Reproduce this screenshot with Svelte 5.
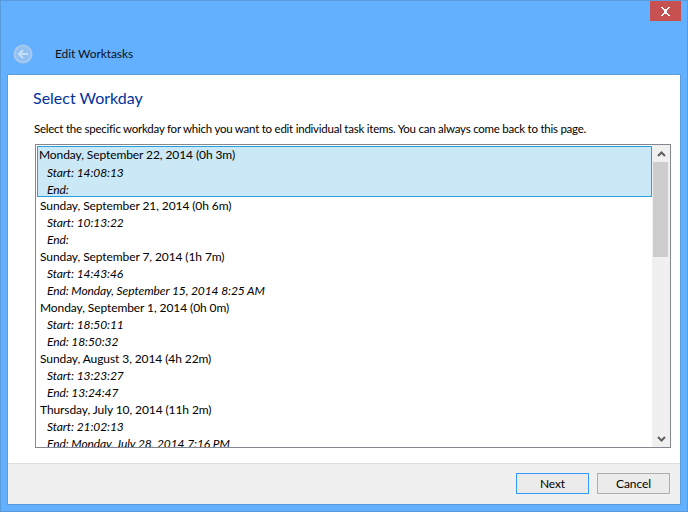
<script>
  const days = [
    { title: 'Monday, September 22, 2014 (0h 3m)', start: '14:08:13', end: '', selected: true },
    { title: 'Sunday, September 21, 2014 (0h 6m)', start: '10:13:22', end: '' },
    { title: 'Sunday, September 7, 2014 (1h 7m)', start: '14:43:46', end: 'Monday, September 15, 2014 8:25 AM' },
    { title: 'Monday, September 1, 2014 (0h 0m)', start: '18:50:11', end: '18:50:32' },
    { title: 'Sunday, August 3, 2014 (4h 22m)', start: '13:23:27', end: '13:24:47' },
    { title: 'Thursday, July 10, 2014 (11h 2m)', start: '21:02:13', end: 'Monday, July 28, 2014 7:16 PM' }
  ];
</script>

<div class="window">
  <div class="titlebar">
    <button class="close" aria-label="Close">
      <svg width="11" height="9" viewBox="0 0 11 9" shape-rendering="crispEdges"><path d="M1 0h2v1h1v1h3V1h1V0h2v1H9v1H8v1H7v3h1v1h1v1h1v1H8V8H7V7H4v1H3v1H1V8h1V7h1V6h1V3H3V2H2V1H1z" fill="#fff"/></svg>
    </button>
  </div>
  <div class="header">
    <svg class="back" width="20" height="20" viewBox="0 0 20 20">
      <circle cx="10" cy="10" r="8.5" fill="#8fc0f2" stroke="#a9c9ec" stroke-width="2"/>
      <path d="M15 10H6.5M10 6l-4 4 4 4" fill="none" stroke="#c4dcf4" stroke-width="2.2"/>
    </svg>
    <span class="wtitle">Edit Worktasks</span>
  </div>
  <div class="panel">
    <div class="content">
      <h1>Select Workday</h1>
      <p>Select the specific workday for which you want to edit individual task items. You can always come back to this page.</p>
      <div class="listbox">
        <div class="items">
          {#each days as d}
            <div class="item" class:selected={d.selected}>
              <div class="line head">{d.title}</div>
              <div class="line sub">Start: {d.start}</div>
              <div class="line sub">End: {d.end}</div>
            </div>
          {/each}
        </div>
        <div class="scrollbar">
          <div class="arrow">
            <svg width="9" height="6" viewBox="0 0 9 6"><path d="M1 5l3.5-3.5L8 5" fill="none" stroke="#606060" stroke-width="2"/></svg>
          </div>
          <div class="track"><div class="thumb"></div></div>
          <div class="arrow">
            <svg width="9" height="6" viewBox="0 0 9 6"><path d="M1 1l3.5 3.5L8 1" fill="none" stroke="#606060" stroke-width="2"/></svg>
          </div>
        </div>
      </div>
    </div>
    <div class="footer">
      <button class="btn default">Next</button>
      <button class="btn">Cancel</button>
    </div>
  </div>
</div>

<style>
  :global(body) { margin: 0; }
  * { box-sizing: border-box; }
  .window {
    width: 688px;
    height: 512px;
    background: #62b0ff;
    border: 1px solid #5a9bdb;
    display: flex;
    flex-direction: column;
    padding: 0 6px 6px 6px;
    font-family: Lato, sans-serif;
    font-size: 12px;
    letter-spacing: -0.09px;
    color: #000;
    overflow: hidden;
  }
  .titlebar {
    height: 20px;
    display: flex;
    justify-content: flex-end;
    flex: none;
  }
  .close {
    width: 31px;
    height: 20px;
    background: #c75050;
    border: 0;
    padding: 0;
    display: flex;
    align-items: center;
    justify-content: center;
  }
  .header {
    height: 53px;
    flex: none;
    display: flex;
    align-items: center;
    padding: 13px 0 0 6px;
  }
  .wtitle { margin: 0 0 2px 22px; color: #111; }
  .panel {
    flex: 1;
    min-height: 0;
    border: 1px solid #5a9bdb;
    background: #fff;
    display: flex;
    flex-direction: column;
  }
  .content { flex: 1; min-height: 0; padding: 0 9px 15px 27px; display: flex; flex-direction: column; }
  h1 {
    margin: 12px 0 0 -2px;
    font-size: 16px;
    font-weight: 400;
    line-height: 22px;
    letter-spacing: 0;
    color: #003399;
  }
  p { margin: 11px 0 0 -1px; line-height: 18px; white-space: nowrap; font-size: 11.5px; letter-spacing: -0.24px; }
  .listbox {
    flex: 1;
    min-height: 0;
    margin-top: 6px;
    border: 1px solid #828790;
    display: flex;
    overflow: hidden;
  }
  .items { flex: 1; min-width: 0; padding: 1px 0 0 1px; overflow: hidden; }
  .item { height: 51px; padding-left: 3px; }
  .item.selected { background: #cbe8f6; border: 1px solid #26a0da; padding-left: 1px; }
  .line { height: 17px; line-height: 17px; white-space: nowrap; }
  .selected .head { margin: -1px 0 1px; }
  .sub { font-style: italic; padding-left: 7px; }
  .selected .sub { padding-left: 8px; }
  .scrollbar { width: 18px; flex: none; background: #f0f0f0; display: flex; flex-direction: column; }
  .arrow { height: 17px; flex: none; display: flex; align-items: center; justify-content: center; }
  .track { flex: 1; }
  .thumb { height: 95px; margin: 0 2px 0 1px; background: #cdcdcd; }
  .footer {
    height: 41px;
    flex: none;
    background: #f0f0f0;
    border-top: 1px solid #dfdfdf;
    display: flex;
    justify-content: flex-end;
    align-items: center;
    gap: 8px;
    padding: 0 10px 1px 0;
  }
  .btn {
    width: 73px;
    height: 21px;
    background: #ebebeb;
    border: 1px solid #adadad;
    font: inherit;
    letter-spacing: inherit;
    color: #000;
    padding: 0 0 1px;
  }
  .btn.default { border-color: #3399ff; }
</style>
